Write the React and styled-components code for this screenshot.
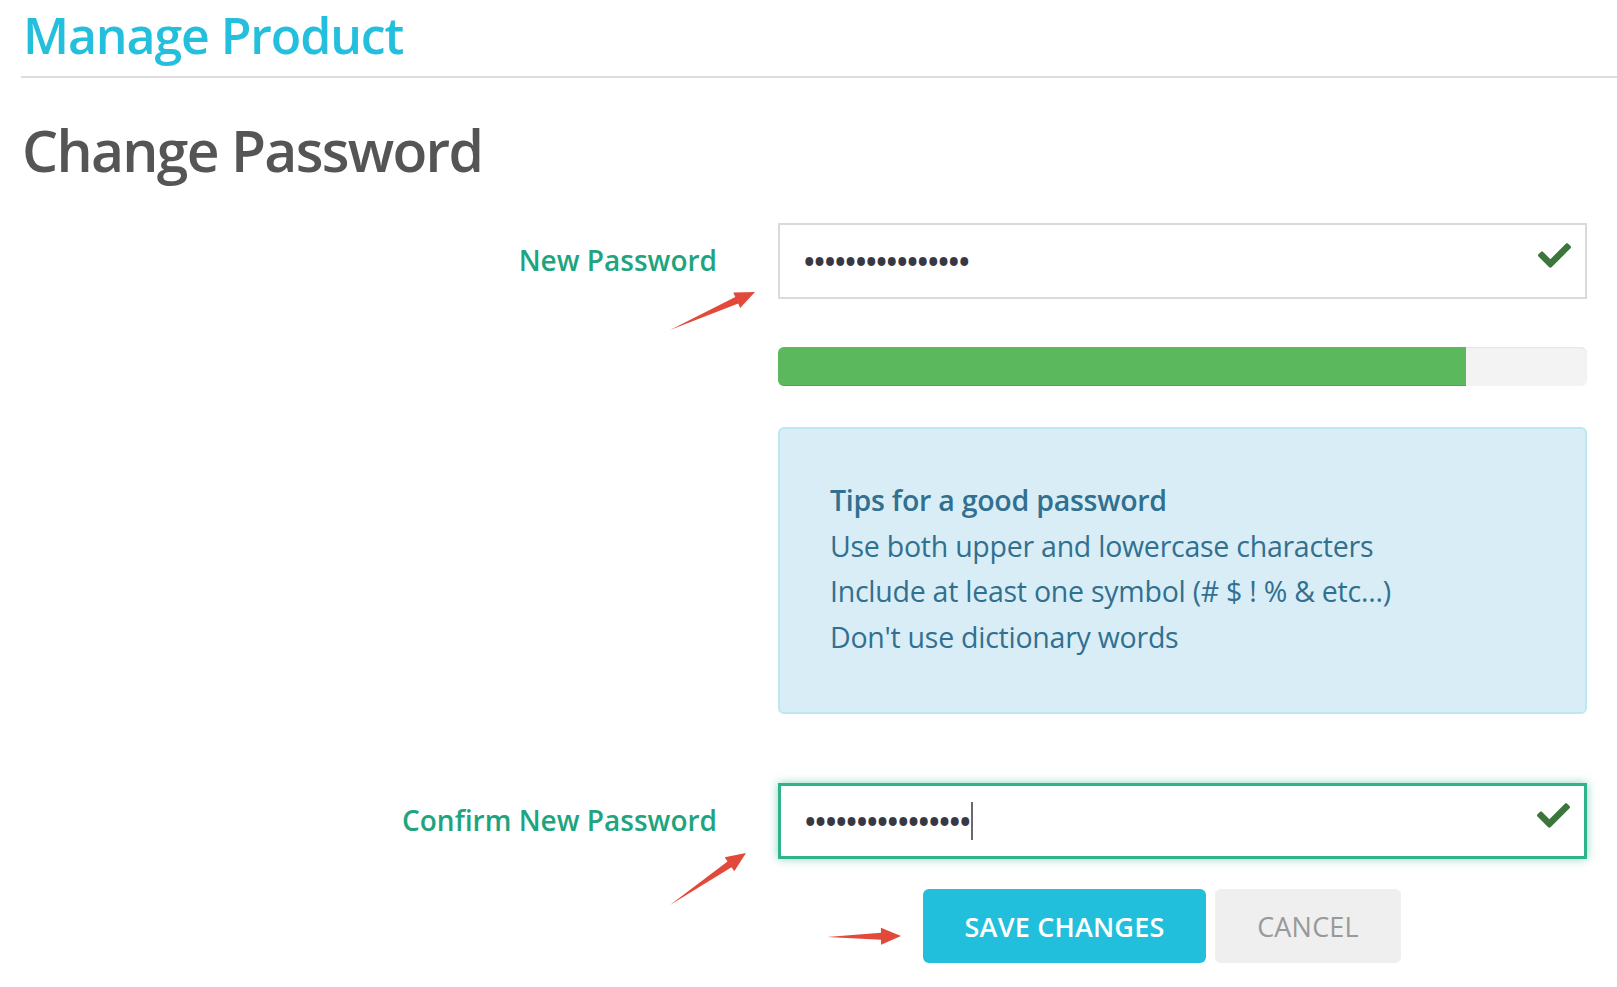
import React from "react";
import styled, { createGlobalStyle } from "styled-components";
import { FaCheck } from "react-icons/fa";

const GlobalStyle = createGlobalStyle`
  html, body { margin: 0; padding: 0; background: #fff; }
  body { font-family: "Open Sans", "Liberation Sans", sans-serif; }
`;

const Page = styled.div`
  position: relative;
  width: 1617px;
  min-height: 987px;
  padding-left: 21px;
  box-sizing: border-box;
  overflow: hidden;
`;

const Header = styled.header`
  border-bottom: 2px solid #dddddd;
  padding-bottom: 11px;
`;

const Brand = styled.h1`
  margin: 5px 0 0 2px;
  font-size: 50px;
  line-height: 60px;
  font-weight: 600;
  letter-spacing: -1.1px;
  color: #23bfdd;
`;

const Title = styled.h2`
  margin: 36px 0 0 1px;
  font-size: 57px;
  line-height: 72px;
  font-weight: 600;
  letter-spacing: -1.7px;
  color: #555555;
`;

const Form = styled.form`
  margin-top: 37px;
  padding-right: 30px;
`;

const Row = styled.div`
  display: grid;
  grid-template-columns: 696px 1fr;
  column-gap: 61px;
  align-items: center;
  margin-top: ${(p) => p.$gap || 0}px;
`;

const Label = styled.label`
  text-align: right;
  font-size: 28px;
  font-weight: 600;
  letter-spacing: 0;
  color: #1fa47f;
  margin-top: -2px;
`;

const Field = styled.div`
  display: flex;
  align-items: center;
  justify-content: space-between;
  height: 76px;
  box-sizing: border-box;
  padding: 0 14px 0 24px;
  background: #fff;
  border: ${(p) => (p.$focus ? "3px solid #2fb38a" : "2px solid #d6dbdf")};
  box-shadow: ${(p) => (p.$focus ? "0 0 9px rgba(47, 179, 138, 0.55)" : "none")};
  color: #383844;
`;

const Dots = styled.span`
  display: flex;
  align-items: center;
  font-size: 28px;
  font-weight: 700;
  letter-spacing: -0.2px;
  line-height: 1;
`;

const Caret = styled.span`
  display: inline-block;
  width: 2px;
  height: 38px;
  background: #6a6a6a;
  margin-left: 1px;
`;

const Check = styled(FaCheck)`
  color: #3c763d;
  width: 33px;
  height: 33px;
  margin-top: -12px;
`;

const Progress = styled.div`
  height: 39px;
  border-radius: 6px;
  background: #f3f3f3;
  box-shadow: inset 0 1px 2px rgba(0, 0, 0, 0.06);
  overflow: hidden;
  display: flex;
`;

const ProgressFill = styled.div`
  height: 100%;
  background: #5cb85c;
  box-shadow: inset 0 -1px 0 rgba(0, 0, 0, 0.12);
`;

const Tips = styled.div`
  box-sizing: border-box;
  padding: 49px 40px 52px 50px;
  background: #d9edf7;
  border: 2px solid #bce8f1;
  border-radius: 6px;
  color: #31708f;
  font-size: 28.5px;
  line-height: 45.5px;
  letter-spacing: -0.25px;
`;

const TipsTitle = styled.div`
  font-weight: 600;
`;

const TipLine = styled.div`
  font-weight: 400;
`;

const Buttons = styled.div`
  display: flex;
  gap: 9px;
  margin-left: 145px;
`;

const Button = styled.button`
  height: 74px;
  width: ${(p) => p.$w}px;
  border: none;
  border-radius: 6px;
  font-family: "Open Sans", "Liberation Sans", sans-serif;
  font-size: 27px;
  font-weight: ${(p) => (p.$primary ? 600 : 400)};
  letter-spacing: 0.2px;
  text-transform: uppercase;
  color: ${(p) => (p.$primary ? "#ffffff" : "#999999")};
  background: ${(p) => (p.$primary ? "#22bfdd" : "#efefef")};
  cursor: pointer;
  padding: 0;
`;

const Overlay = styled.svg`
  position: absolute;
  left: 0;
  top: 0;
  pointer-events: none;
`;

function arrowPoints(tail, tip, headLen = 20, headW = 17, shaftW = 7) {
  const dx = tip[0] - tail[0];
  const dy = tip[1] - tail[1];
  const len = Math.hypot(dx, dy);
  const ux = dx / len;
  const uy = dy / len;
  const nx = -uy;
  const ny = ux;
  const bx = tip[0] - ux * headLen;
  const by = tip[1] - uy * headLen;
  const pts = [
    [tail[0], tail[1]],
    [bx + (nx * shaftW) / 2, by + (ny * shaftW) / 2],
    [bx + (nx * headW) / 2, by + (ny * headW) / 2],
    [tip[0], tip[1]],
    [bx - (nx * headW) / 2, by - (ny * headW) / 2],
    [bx - (nx * shaftW) / 2, by - (ny * shaftW) / 2],
  ];
  return pts.map((p) => p.map((v) => v.toFixed(1)).join(",")).join(" ");
}

const arrows = [
  { tail: [670, 330], tip: [755, 292] },
  { tail: [670, 905], tip: [746, 853] },
  { tail: [827, 937], tip: [901, 936] },
];

const DOTS = "\u2022".repeat(16);

export default function App() {
  return (
    <>
      <GlobalStyle />
      <Page>
        <Header>
          <Brand>Manage Product</Brand>
        </Header>
        <Title>Change Password</Title>
        <Form onSubmit={(e) => e.preventDefault()}>
          <Row>
            <Label>New Password</Label>
            <Field>
              <Dots>{DOTS}</Dots>
              <Check />
            </Field>
          </Row>
          <Row $gap={48}>
            <span />
            <Progress>
              <ProgressFill style={{ width: "85%" }} />
            </Progress>
          </Row>
          <Row $gap={41}>
            <span />
            <Tips>
              <TipsTitle>Tips for a good password</TipsTitle>
              <TipLine>Use both upper and lowercase characters</TipLine>
              <TipLine>Include at least one symbol (# $ ! % &amp; etc...)</TipLine>
              <TipLine>Don't use dictionary words</TipLine>
            </Tips>
          </Row>
          <Row $gap={69}>
            <Label>Confirm New Password</Label>
            <Field $focus>
              <Dots>
                {DOTS}
                <Caret />
              </Dots>
              <Check />
            </Field>
          </Row>
          <Row $gap={30}>
            <span />
            <Buttons>
              <Button type="submit" $primary $w={283}>Save Changes</Button>
              <Button type="button" $w={186}>Cancel</Button>
            </Buttons>
          </Row>
        </Form>
        <Overlay width="1617" height="987" viewBox="0 0 1617 987">
          {arrows.map((a, i) => (
            <polygon key={i} points={arrowPoints(a.tail, a.tip)} fill="#e2493a" />
          ))}
        </Overlay>
      </Page>
    </>
  );
}
